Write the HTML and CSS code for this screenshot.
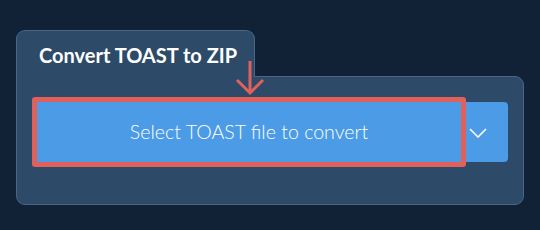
FILE: index.html
```html
<!DOCTYPE html>
<html lang="en">
<head>
	<meta charset="UTF-8">
	<title>Convert TOAST to ZIP</title>
	<link rel="stylesheet" href="styles.css">
</head>
<body>
	<section class="converter">
		<div class="tab">
			<h2>Convert TOAST to ZIP</h2>
			<svg class="pointer" width="30" height="36" viewBox="0 0 30 36">
				<path d="M15 1 V33 M2 20 L15 33 L28 20" fill="none" stroke="#e0605b" stroke-width="3"/>
			</svg>
		</div>
		<div class="panel">
			<div class="picker">
				<button class="select">Select TOAST file to convert</button>
				<button class="more">
					<svg width="18" height="10" viewBox="0 0 18 10">
						<path d="M1 1 L9 9 L17 1" fill="none" stroke="#fff" stroke-width="1.6"/>
					</svg>
				</button>
			</div>
		</div>
	</section>
</body>
</html>
```

FILE: styles.css
```css
body, section, div, h2 {
	margin: 0;
	padding: 0;
}

body {
	background-color: #112236;
	font-family: Lato, "Liberation Sans", sans-serif;
	padding: 30px 16px;
}

.converter {
	width: 508px;
}

.tab {
	position: relative;
	z-index: 1;
	width: 239px;
	height: 47px;
	margin-bottom: -1px;
	background-color: #2d4a69;
	border: 1px solid #4b6584;
	border-bottom: none;
	border-radius: 9px 9px 0 0;
	box-sizing: border-box;
}

.tab h2 {
	color: #fff;
	font-size: 20px;
	font-weight: bold;
	padding: 13px 0 0 22px;
	line-height: 23px;
}

.pointer {
	position: absolute;
	left: 218px;
	top: 29px;
}

.panel {
	height: 129px;
	background-color: #2d4a69;
	border: 1px solid #4b6584;
	border-radius: 0 9px 9px 9px;
	box-sizing: border-box;
	padding: 20px 15px 0 15px;
}

.picker {
	display: flex;
	align-items: center;
}

.picker button {
	background-color: #4b9be6;
	color: #fff;
	font-family: Lato, "Liberation Sans", sans-serif;
	border: none;
	cursor: pointer;
}

.select {
	width: 434px;
	height: 70px;
	border: 5px solid #e0605b !important;
	border-radius: 3px;
	font-size: 19.6px;
	font-weight: 300;
	padding: 0 0 1px 0;
}

.more {
	width: 42px;
	height: 60px;
	border-radius: 0 4px 4px 0;
	padding: 2px 0 0 3px;
	text-align: left;
}

.more svg {
	display: block;
}
```
